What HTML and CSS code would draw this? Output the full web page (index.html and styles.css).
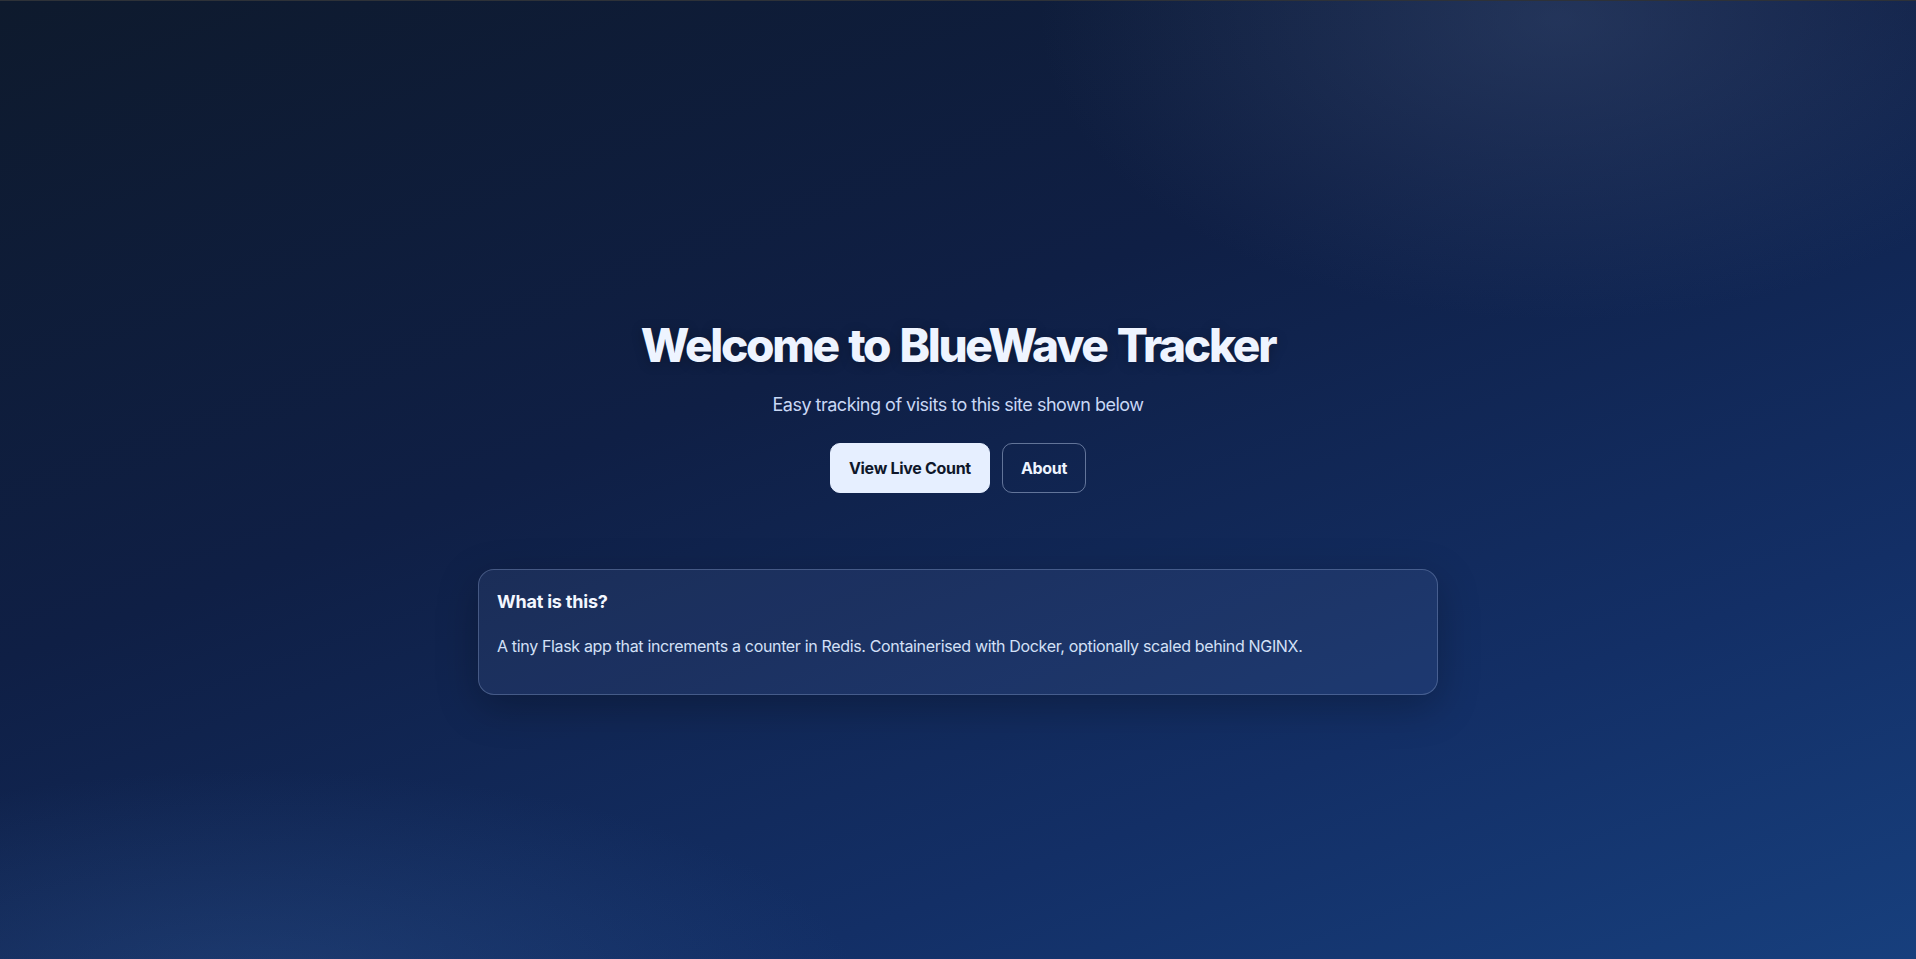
FILE: index.html
```html
<!DOCTYPE html>
<html lang="en">
<head>
<meta charset="utf-8">
<title>BlueWave Tracker</title>
<link rel="stylesheet" href="styles.css">
</head>
<body>
<main class="page">
  <section class="hero">
    <h1 class="hero-title">Welcome to BlueWave Tracker</h1>
    <p class="hero-sub">Easy tracking of visits to this site shown below</p>
    <div class="actions">
      <a class="btn btn-primary" href="#">View Live Count</a>
      <a class="btn btn-ghost" href="#">About</a>
    </div>
  </section>
  <section class="card">
    <h2 class="card-title">What is this?</h2>
    <p class="card-text">A tiny Flask app that increments a counter in Redis. Containerised with Docker, optionally scaled behind NGINX.</p>
  </section>
</main>
</body>
</html>
```

FILE: styles.css
```css
* { box-sizing: border-box; }
html, body { height: 100%; }
body {
  margin: 0;
  border-top: 1px solid #2e3238;
  font-family: Inter, "Noto Sans", sans-serif;
  color: #eef4ff;
  background:
    radial-gradient(ellipse 520px 300px at 1560px 20px, rgba(60, 80, 120, 0.45), rgba(60, 80, 120, 0) 100%),
    radial-gradient(ellipse 600px 220px at 260px 990px, rgba(50, 90, 150, 0.35), rgba(50, 90, 150, 0) 100%),
    linear-gradient(160deg, #0e1a2d 0%, #0f1f45 40%, #132f66 75%, #173f7d 100%);
  overflow: hidden;
}
.page {
  display: flex;
  flex-direction: column;
  align-items: center;
  padding-top: 317px;
}
.hero {
  display: flex;
  flex-direction: column;
  align-items: center;
}
.hero-title {
  margin: 0;
  font-size: 46px;
  line-height: 1.2;
  font-weight: 800;
  letter-spacing: -2.3px;
  word-spacing: 2.5px;
  color: #eef4ff;
  text-shadow: 0 2px 12px rgba(0, 0, 0, 0.25);
}
.hero-sub {
  margin: 18px 0 0;
  font-size: 18px;
  line-height: 1.5;
  letter-spacing: -0.5px;
  color: #c9d8f5;
}
.actions {
  display: flex;
  gap: 12px;
  margin-top: 25px;
}
.btn {
  display: inline-flex;
  align-items: center;
  justify-content: center;
  height: 50px;
  padding: 0 18px;
  border-radius: 10px;
  font-size: 16px;
  font-weight: 700;
  letter-spacing: -0.3px;
  text-decoration: none;
}
.btn-primary {
  background: #e6efff;
  color: #0f172a;
  border: 1px solid #e6efff;
}
.btn-ghost {
  color: #eef4ff;
  border: 1px solid rgba(200, 215, 245, 0.45);
  background: transparent;
}
.card {
  width: 960px;
  margin-top: 76px;
  padding: 20px 18px;
  border-radius: 16px;
  border: 1px solid rgba(148, 170, 210, 0.35);
  background: rgba(120, 150, 210, 0.11);
  box-shadow: 0 12px 40px rgba(0, 0, 0, 0.25);
}
.card-title {
  margin: 0;
  font-size: 18px;
  line-height: 1.3;
  font-weight: 700;
  letter-spacing: -0.2px;
  color: #f3f7ff;
}
.card-text {
  margin: 20px 0 16px;
  font-size: 16px;
  line-height: 1.5;
  letter-spacing: -0.34px;
  color: #d3e0f7;
}
```
